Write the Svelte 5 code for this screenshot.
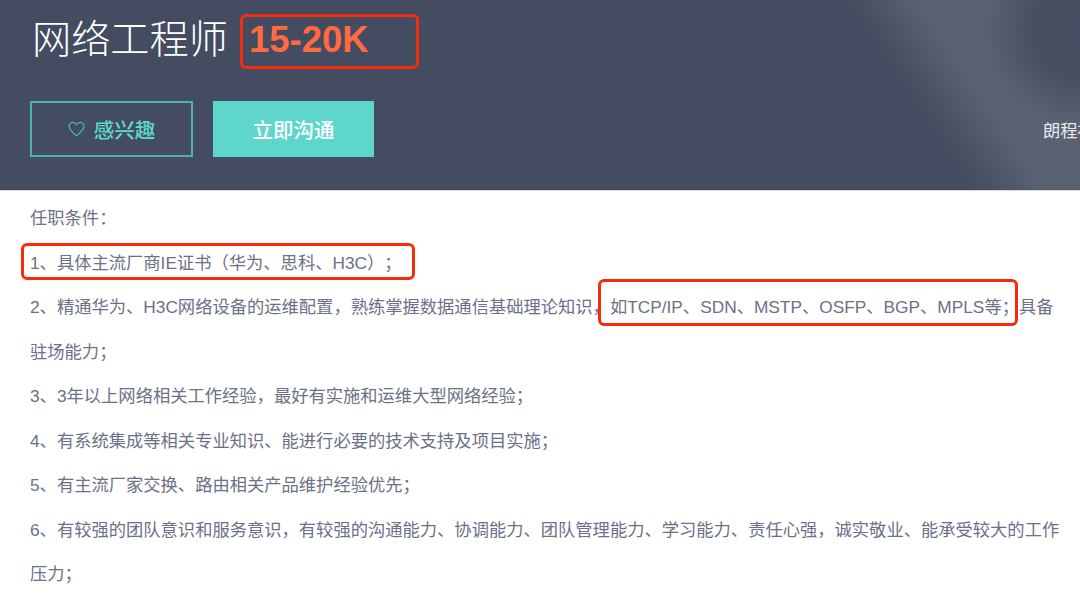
<script>
	const lines = [
		'任职条件：',
		'1、具体主流厂商IE证书（华为、思科、H3C）；',
		'2、精通华为、H3C网络设备的运维配置，熟练掌握数据通信基础理论知识，如TCP/IP、SDN、MSTP、OSFP、BGP、MPLS等；具备驻场能力；',
		'3、3年以上网络相关工作经验，最好有实施和运维大型网络经验；',
		'4、有系统集成等相关专业知识、能进行必要的技术支持及项目实施；',
		'5、有主流厂家交换、路由相关产品维护经验优先；',
		'6、有较强的团队意识和服务意识，有较强的沟通能力、协调能力、团队管理能力、学习能力、责任心强，诚实敬业、能承受较大的工作压力；'
	];
	const marks = [
		{ x: 240, y: 14, w: 179, h: 55 },
		{ x: 21, y: 243, w: 394, h: 37 },
		{ x: 598, y: 279, w: 420, h: 47 }
	];
</script>

<div class="page">
	<header class="head">
		<div class="title-row">
			<h1>网络工程师</h1>
			<span class="salary">15-20K</span>
		</div>
		<div class="actions">
			<button class="btn outline">
				<svg viewBox="0 0 16 15" width="17" height="16" aria-hidden="true">
					<path d="M8 13.8 C4.6 11 1 8.4 1 5 C1 2.8 2.7 1.2 4.6 1.2 C6 1.2 7.3 2 8 3.3 C8.7 2 10 1.2 11.4 1.2 C13.3 1.2 15 2.8 15 5 C15 8.4 11.4 11 8 13.8 Z" />
				</svg>
				感兴趣
			</button>
			<button class="btn solid">立即沟通</button>
			<span class="person">朗程福</span>
		</div>
	</header>
	<section class="desc">
		{#each lines as line}
			<p>{line}</p>
		{/each}
	</section>
	{#each marks as m}
		<div class="mark" style="left:{m.x}px;top:{m.y}px;width:{m.w}px;height:{m.h}px"></div>
	{/each}
</div>

<style>
	:global(body) {
		margin: 0;
	}
	.page {
		position: relative;
		width: 1080px;
		height: 609px;
		overflow: hidden;
		background: #fff;
		font-family: "Liberation Sans", "Noto Sans CJK SC", sans-serif;
		text-spacing-trim: space-all;
	}
	.head {
		box-sizing: border-box;
		height: 191px;
		padding: 10px 0 0 30px;
		border-bottom: 1px solid #d5d7dc;
		background:
			radial-gradient(ellipse 95px 95px at 1080px 30px, #464f63 0%, #474f63 50%, rgba(71, 79, 99, 0) 100%),
			linear-gradient(56deg, #434c60 0%, #434c60 80.5%, #596173 86.5%, #596173 100%);
		overflow: hidden;
	}
	.title-row {
		display: flex;
		align-items: center;
		height: 60px;
	}
	h1 {
		margin: 0;
		padding-left: 2px;
		font-size: 39.2px;
		font-weight: 300;
		color: #fff;
		line-height: 60px;
	}
	.salary {
		margin-left: 21px;
		font-size: 36.5px;
		font-weight: 700;
		color: #ff6a40;
	}
	.actions {
		display: flex;
		align-items: center;
		margin-top: 31px;
	}
	.btn {
		flex: none;
		box-sizing: border-box;
		height: 56px;
		padding: 0;
		display: flex;
		align-items: center;
		justify-content: center;
		font-family: inherit;
		font-size: 20.5px;
		font-weight: 500;
		border-radius: 0;
	}
	.outline {
		width: 163px;
		gap: 9px;
		background: transparent;
		border: 2px solid #4fb3ad;
		color: #5fd6cb;
	}
	.outline svg {
		fill: none;
		stroke: #4fb3ad;
		stroke-width: 1.2;
	}
	.solid {
		width: 161px;
		margin-left: 20px;
		background: #5fd6cb;
		border: 0;
		color: #fff;
	}
	.person {
		flex: none;
		margin-left: 669px;
		font-size: 17.3px;
		color: #e6e8ec;
		white-space: nowrap;
	}
	.desc {
		padding: 5px 15px 0 30px;
		font-size: 17.3px;
		line-height: 44.5px;
		color: #6b7186;
	}
	.desc p {
		margin: 0;
	}
	.mark {
		position: absolute;
		box-sizing: border-box;
		border: 3px solid #f52b0c;
		border-radius: 6px;
	}
</style>
